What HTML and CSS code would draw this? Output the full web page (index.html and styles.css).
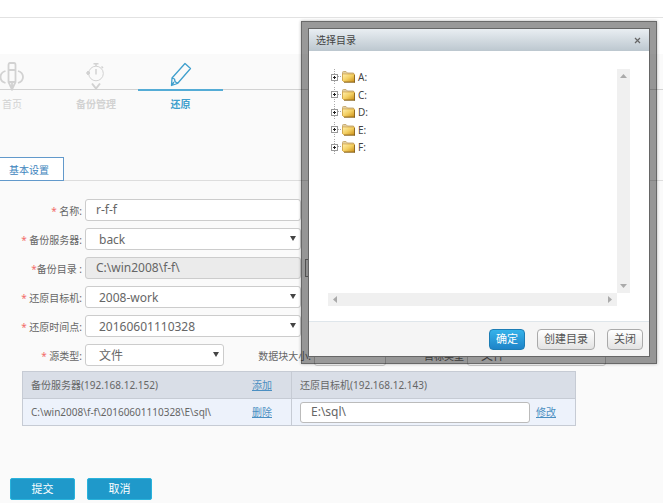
FILE: index.html
```html
<!DOCTYPE html>
<html lang="zh-CN">
<head>
<meta charset="utf-8">
<title>还原</title>
<link rel="stylesheet" href="styles.css">
</head>
<body>
<header class="topbar"></header>
<div class="band"></div>
<main class="page">
  <nav class="steps">
    <a class="step" href="#">
      <span class="step-icon">
        <svg class="icon-home" width="26" height="29" viewBox="0 0 26 29" fill="none" stroke="currentColor" stroke-width="1.800">
          <path d="M9.500 20V3Q9.500 1 11 1H15Q16.500 1 16.500 3V20L13 27.500L9.500 20ZM9.500 8H16.500M9.500 20H16.500M13 20V27"/>
          <path d="M6.500 9Q1.500 10.500 1.500 15T6.500 21M19 9Q24 10.500 24 15T19 21"/>
        </svg>
      </span>
      <span class="step-name">首页</span>
    </a>
    <a class="step strong" href="#">
      <span class="step-icon">
        <svg class="icon-timer" width="20" height="28" viewBox="0 0 20 28" fill="none" stroke="currentColor">
          <circle cx="10" cy="11.500" r="7.300"/>
          <path d="M7.500 1.800H12.500M10 2V4M10 7V12.500M15.500 4.500L17 6" stroke-width="1.500"/>
          <path d="M2 9L4 11L2 13L.500 11Z" fill="currentColor"/>
          <path d="M6 21.500L10 26.500L14 21.500" stroke-width="2"/>
        </svg>
      </span>
      <span class="step-name">备份管理</span>
    </a>
    <a class="step strong active" href="#">
      <span class="step-icon">
        <svg class="icon-pencil" width="22" height="25" viewBox="0 0 22 25" fill="none" stroke="currentColor" stroke-width="1.300" stroke-linejoin="round">
          <path d="M1.500 23.500L2 16L15 1.500L20.500 6.500L7.500 21.500ZM2 16L4.500 17L5 19.500L7.500 21.500M1.500 23.500L4 20"/>
        </svg>
      </span>
      <span class="step-name">还原</span>
    </a>
  </nav>

  <div class="tabs"><button class="tab" type="button">基本设置</button></div>

  <form class="form">
    <div class="row">
      <label for="name"><i>*</i> 名称:</label>
      <input class="field" id="name" type="text" value="r-f-f">
    </div>
    <div class="row">
      <label for="server"><i>*</i> 备份服务器:</label>
      <span class="pick"><select class="field" id="server"><option>back</option></select></span>
    </div>
    <div class="row">
      <label for="dir"><i>*</i>备份目录 :</label>
      <input class="field" id="dir" type="text" value="C:\win2008\f-f\" readonly>
      <button class="browse" type="button" aria-label="浏览"></button>
    </div>
    <div class="row">
      <label for="target"><i>*</i> 还原目标机:</label>
      <span class="pick"><select class="field" id="target"><option>2008-work</option></select></span>
    </div>
    <div class="row">
      <label for="time"><i>*</i> 还原时间点:</label>
      <span class="pick"><select class="field" id="time"><option>20160601110328</option></select></span>
    </div>
    <div class="row">
      <label for="source"><i>*</i> 源类型:</label>
      <span class="pick short"><select class="field" id="source"><option>文件</option></select></span>
      <label class="next" for="block">数据块大小:</label>
      <input class="field block" id="block" type="text">
      <label class="next" for="kind">目标类型</label>
      <span class="pick short"><select class="field" id="kind"><option>文件</option></select></span>
    </div>

    <table class="paths">
      <tr>
        <th><div class="cell">备份服务器(192.168.12.152)<a href="#">添加</a></div></th>
        <th><div class="cell">还原目标机(192.168.12.143)</div></th>
      </tr>
      <tr>
        <td><div class="cell">C:\win2008\f-f\20160601110328\E\sql\<a href="#">删除</a></div></td>
        <td><div class="cell"><input class="field" type="text" value="E:\sql\" aria-label="还原目标机"><a href="#">修改</a></div></td>
      </tr>
    </table>

    <div class="actions">
      <button type="submit">提交</button>
      <button type="button">取消</button>
    </div>
  </form>
</main>

<div class="frame">
  <section class="dialog" role="dialog" aria-labelledby="dialog-title">
    <header class="dialog-head">
      <span id="dialog-title">选择目录</span>
      <button class="close" type="button" aria-label="关闭">
        <svg width="7" height="7" viewBox="0 0 7 7" stroke="#666" stroke-width="1.200"><path d="M1 1L6 6M6 1L1 6"/></svg>
      </button>
    </header>
    <div class="dialog-body">
      <div class="viewer">
        <ul class="tree">
          <li><button class="expand" type="button" aria-label="展开"></button><svg class="folder" width="13" height="12"><use href="#folder"/></svg>A:</li>
          <li><button class="expand" type="button" aria-label="展开"></button><svg class="folder" width="13" height="12"><use href="#folder"/></svg>C:</li>
          <li><button class="expand" type="button" aria-label="展开"></button><svg class="folder" width="13" height="12"><use href="#folder"/></svg>D:</li>
          <li><button class="expand" type="button" aria-label="展开"></button><svg class="folder" width="13" height="12"><use href="#folder"/></svg>E:</li>
          <li><button class="expand" type="button" aria-label="展开"></button><svg class="folder" width="13" height="12"><use href="#folder"/></svg>F:</li>
        </ul>
        <div class="bar vertical">
          <svg width="7" height="4"><path d="M0 4L3.500 0L7 4Z"/></svg>
          <svg width="7" height="4"><path d="M0 0L3.500 4L7 0Z"/></svg>
        </div>
        <div class="bar horizontal">
          <svg width="4" height="7"><path d="M4 0L0 3.500L4 7Z"/></svg>
          <svg width="4" height="7"><path d="M0 0L4 3.500L0 7Z"/></svg>
        </div>
      </div>
    </div>
    <footer class="dialog-foot">
      <button class="primary" type="button">确定</button>
      <button type="button">创建目录</button>
      <button type="button">关闭</button>
    </footer>
  </section>
</div>

<svg class="defs" width="0" height="0" aria-hidden="true">
  <defs>
    <linearGradient id="gold" x1="0" y1="0" x2="1" y2="1">
      <stop offset="0" stop-color="#fff0b0"/><stop offset=".5" stop-color="#f3cf62"/><stop offset="1" stop-color="#c98d17"/>
    </linearGradient>
    <symbol id="folder" viewBox="0 0 13 12">
      <path d="M.500 9.500V1.500Q.500.500 1.500.500H4L5.500 2H11.500V5H.500Z" fill="#e3cf9f" stroke="#c9ae78"/>
      <path d="M1 3H12.500V11H2L.500 9.500V3Z" fill="url(#gold)" stroke="#c9952f" stroke-width=".6"/>
      <path d="M2 11.200H13M12.600 4V11.500" stroke="#76500c" stroke-width=".8"/>
    </symbol>
  </defs>
</svg>
</body>
</html>
```

FILE: styles.css
```css
* { box-sizing: border-box; }

body {
  margin: 0;
  min-height: 100vh;
  background: #fafafa;
  color: #666;
  font: 10px/14px "Noto Sans", "Noto Sans CJK SC", sans-serif;
}

button, input, select { font: inherit; color: inherit; margin: 0; }
a { color: #4b8fc2; }

.topbar { height: 18px; background: #fff; border-bottom: 1px solid #e2e2e2; }
.band { height: 36px; background: #fff; }
.page { overflow: hidden; }

/* Step navigation */
.steps {
  display: flex;
  height: 103px;
  margin-left: -30px;
  background: linear-gradient(#d2d2d2, #d2d2d2) 0 35px / 100% 1px no-repeat;
}
.step {
  display: flex;
  flex-direction: column;
  align-items: center;
  width: 84px;
  color: #d2d2d2;
  text-decoration: none;
}
.step-icon {
  display: flex;
  justify-content: center;
  width: 100%;
  height: 36px;
  padding-top: 8px;
}
.step-icon svg { flex: none; }
.step-name { margin-top: 7px; }
.strong .step-name { font-weight: 700; }
.active { width: 85px; color: #3f9fcd; }
.active .step-icon { height: 37px; border-bottom: 2px solid #54acd6; }
.active .step-name { margin-top: 6px; }

/* Tabs */
.tabs { display: flex; border-bottom: 1px solid #ddd; }
.tab {
  height: 24px;
  margin: 0 0 -1px -1px;
  padding: 2px 14px 0 9px;
  border: 1px solid #6299cb;
  background: #fff;
  color: #3d84bd;
}

/* Form */
.form { padding-top: 11px; }
.row { display: flex; align-items: center; padding-top: 7px; }
.row label { flex: none; width: 85px; padding: 2px 3px 0 0; text-align: right; white-space: nowrap; }
.row i { color: #f26a6a; font-style: normal; }
.field {
  width: 216px;
  height: 22px;
  padding: 0 10px 1px;
  border: 1px solid #ccc;
  border-radius: 3px;
  background: #fff;
  font-size: 12px;
}
.field[readonly] { background: #ebebeb; }
.pick { position: relative; width: 216px; }
.pick .field { display: block; appearance: none; width: 100%; padding: 1px 13px 0; }
.pick::after {
  content: "";
  position: absolute;
  top: 8px;
  right: 5px;
  border: solid transparent;
  border-width: 5px 3px 0;
  border-top-color: #444;
}
.short { width: 139px; }
.row .next { width: 90px; }
.row .next:last-of-type { width: 81px; }
.block { width: 72px; }
.browse { width: 60px; height: 18px; margin-left: 4px; border: 1px solid #888; background: #eee; }

/* Path mapping */
.paths {
  width: 554px;
  margin: 5px 0 0 22px;
  border-collapse: collapse;
  table-layout: fixed;
  background: #edf2fb;
}
.paths th, .paths td { height: 27px; padding: 0; border: solid #c6cbd4; border-width: 1px 0; font-weight: 400; text-align: left; }
.paths th { background: #d9dee7; }
.paths tr > :first-child { width: 269px; border-width: 1px; }
.paths tr > :last-child { border-right-width: 1px; }
.cell { display: flex; align-items: center; justify-content: space-between; padding: 0 19px 0 8px; }
.cell .field { width: 230px; height: 21px; border: 1px solid #bbb; }

/* Form actions */
.actions { display: flex; gap: 12px; padding: 52px 10px 3px; }
.actions button {
  width: 65px;
  height: 22px;
  padding: 0;
  border: 1px solid #29b3dc;
  border-radius: 2px;
  background: #1f99ca;
  color: #fff;
  font-size: 11px;
}

/* Directory dialog */
.frame {
  position: absolute;
  top: 21px;
  left: 301px;
  width: 356px;
  padding: 7px;
  border: 1px solid rgba(0, 0, 0, .3);
  background: rgba(0, 0, 0, .4);
  box-shadow: 0 0 3px rgba(0, 0, 0, .3);
}
.dialog { background: #fff; box-shadow: 0 0 0 1px #666; color: #444; }
.dialog-head {
  display: flex;
  align-items: center;
  justify-content: space-between;
  height: 22px;
  padding: 0 8px 0 7px;
  background: linear-gradient(#e9eef2, #bcc7cf);
}
.close { display: flex; padding: 0; border: 0; background: none; }
.dialog-body { padding: 18px 19px 15px; }
.viewer { display: grid; grid-template: 224px 13px / 1fr 13px; }
.tree {
  display: flex;
  flex-direction: column;
  justify-content: space-between;
  height: 86px;
  margin: 0;
  padding: 0 0 0 3px;
  list-style: none;
}
.tree li {
  display: flex;
  align-items: center;
  height: 16px;
  background: repeating-linear-gradient(#aaa 0 1px, transparent 1px 2px) 3px 0 / 1px 100% no-repeat,
    repeating-linear-gradient(90deg, #aaa 0 1px, transparent 1px 2px) 7px 7px / 4px 1px no-repeat;
}
.expand {
  width: 7px;
  height: 7px;
  padding: 0;
  border: 1px solid #999;
  background: linear-gradient(#222, #222) center / 3px 1px no-repeat,
    linear-gradient(#222, #222) center / 1px 3px no-repeat, #fff;
}
.folder { margin: 0 3px 0 4px; }
.bar { display: flex; align-items: center; justify-content: space-between; padding: 5px; background: #f0f0f0; fill: #aaa; }
.vertical { flex-direction: column; }
.dialog-foot {
  display: flex;
  align-items: center;
  justify-content: flex-end;
  gap: 12px;
  height: 35px;
  padding: 0 6px;
  border-top: 1px solid #dfe6eb;
  background: #f5f5f5;
}
.dialog-foot button {
  height: 21px;
  padding: 0 6px;
  border: 1px solid #aaa;
  border-radius: 4px;
  background: linear-gradient(#fff, #e3e3e3);
  color: #555;
  font-size: 11px;
}
.dialog-foot .primary { border-color: #1c7db5; background: linear-gradient(#35b3ea, #1e83c8); color: #fff; }
.defs { position: absolute; }
```
